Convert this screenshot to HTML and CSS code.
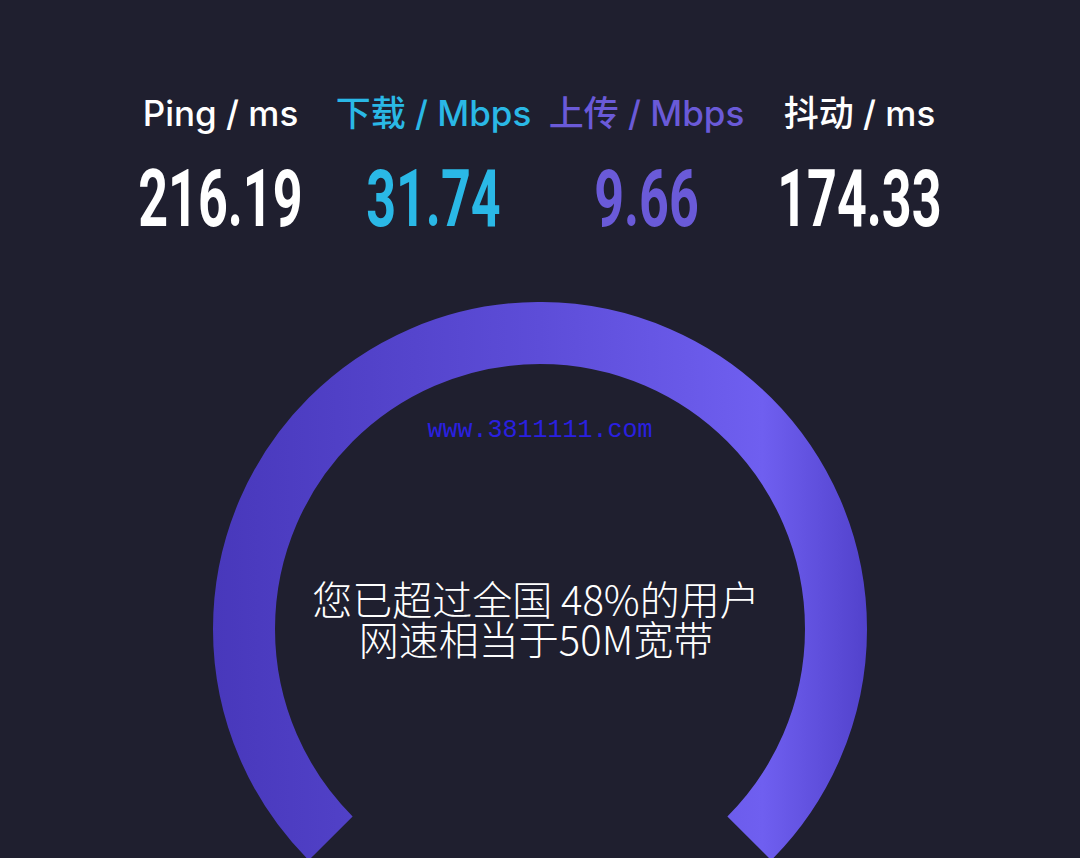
FILE: index.html
```html
<!DOCTYPE html>
<html lang="zh-CN">
<head>
  <meta charset="UTF-8">
  <meta name="viewport" content="width=device-width, initial-scale=1.0">
  <title>网速测试结果</title>
  <link rel="stylesheet" href="styles.css">
</head>
<body>

<div class="stats">
  <div class="stat">
    <div class="label">Ping / ms</div>
    <div class="value"><span>216.19</span></div>
  </div>
  <div class="stat down">
    <div class="label">下载 / Mbps</div>
    <div class="value"><span>31.74</span></div>
  </div>
  <div class="stat up">
    <div class="label">上传 / Mbps</div>
    <div class="value"><span>9.66</span></div>
  </div>
  <div class="stat">
    <div class="label">抖动 / ms</div>
    <div class="value"><span>174.33</span></div>
  </div>
</div>

<div class="gauge">
  <svg class="ring" width="654" height="654" viewBox="0 0 654 654">
    <defs>
      <linearGradient id="ringFill" x1="0" y1="0" x2="654" y2="0" gradientUnits="userSpaceOnUse">
        <stop offset="0" stop-color="#4838bb"/>
        <stop offset="0.5" stop-color="#5d4dd8"/>
        <stop offset="0.84" stop-color="#6f5ff0"/>
        <stop offset="1" stop-color="#5242cc"/>
      </linearGradient>
    </defs>
    <!-- 270 degree arc, open at the bottom -->
    <path d="M 117.7 536.3 A 296 296 0 1 1 536.3 536.3" fill="none" stroke="url(#ringFill)" stroke-width="62"/>
  </svg>
  <div class="watermark">www.3811111.com</div>
  <div class="summary">
    <p>您已超过全国 48%的用户</p>
    <p>网速相当于50M宽带</p>
  </div>
</div>

</body>
</html>
```

FILE: styles.css
```css
html, body {
  height: 858px;
  overflow: hidden;
}
body {
  margin: 0;
  background-color: #1f1f2f;
  color: #ffffff;
  font-family: "Inter", "Noto Sans CJK SC", sans-serif;
}
.stats {
  display: grid;
  grid-template-columns: repeat(4, 213px);
  justify-content: center;
  padding-top: 91px;
}
.stat {
  display: flex;
  flex-direction: column;
  align-items: center;
}
.label {
  font-size: 35px;
  font-weight: 500;
  line-height: 44px;
  white-space: nowrap;
}
.value {
  display: flex;
  justify-content: center;
  margin-top: 19px;
  height: 90px;
  font-family: "Roboto", sans-serif;
  font-size: 80px;
  font-weight: 700;
  line-height: 90px;
  white-space: nowrap;
}
.value span {
  display: inline-block;
  transform: scaleX(0.65);
}
.down {
  color: #2ab8e6;
}
.up {
  color: #6a5ad8;
}
.gauge {
  position: relative;
  width: 654px;
  height: 556px;
  margin: 58px auto 0;
  overflow: hidden;
}
.ring {
  display: block;
}
.watermark {
  position: absolute;
  top: 114px;
  left: 0;
  right: 0;
  text-align: center;
  font-family: "Liberation Mono", monospace;
  font-size: 25px;
  line-height: 30px;
  color: #2a20e0;
}
.summary {
  position: absolute;
  top: 276px;
  left: 0;
  right: 8px;
  text-align: center;
  font-family: "Noto Sans CJK SC", sans-serif;
  font-size: 40px;
  font-weight: 300;
  line-height: 40px;
}
.summary p {
  margin: 0;
}
```
